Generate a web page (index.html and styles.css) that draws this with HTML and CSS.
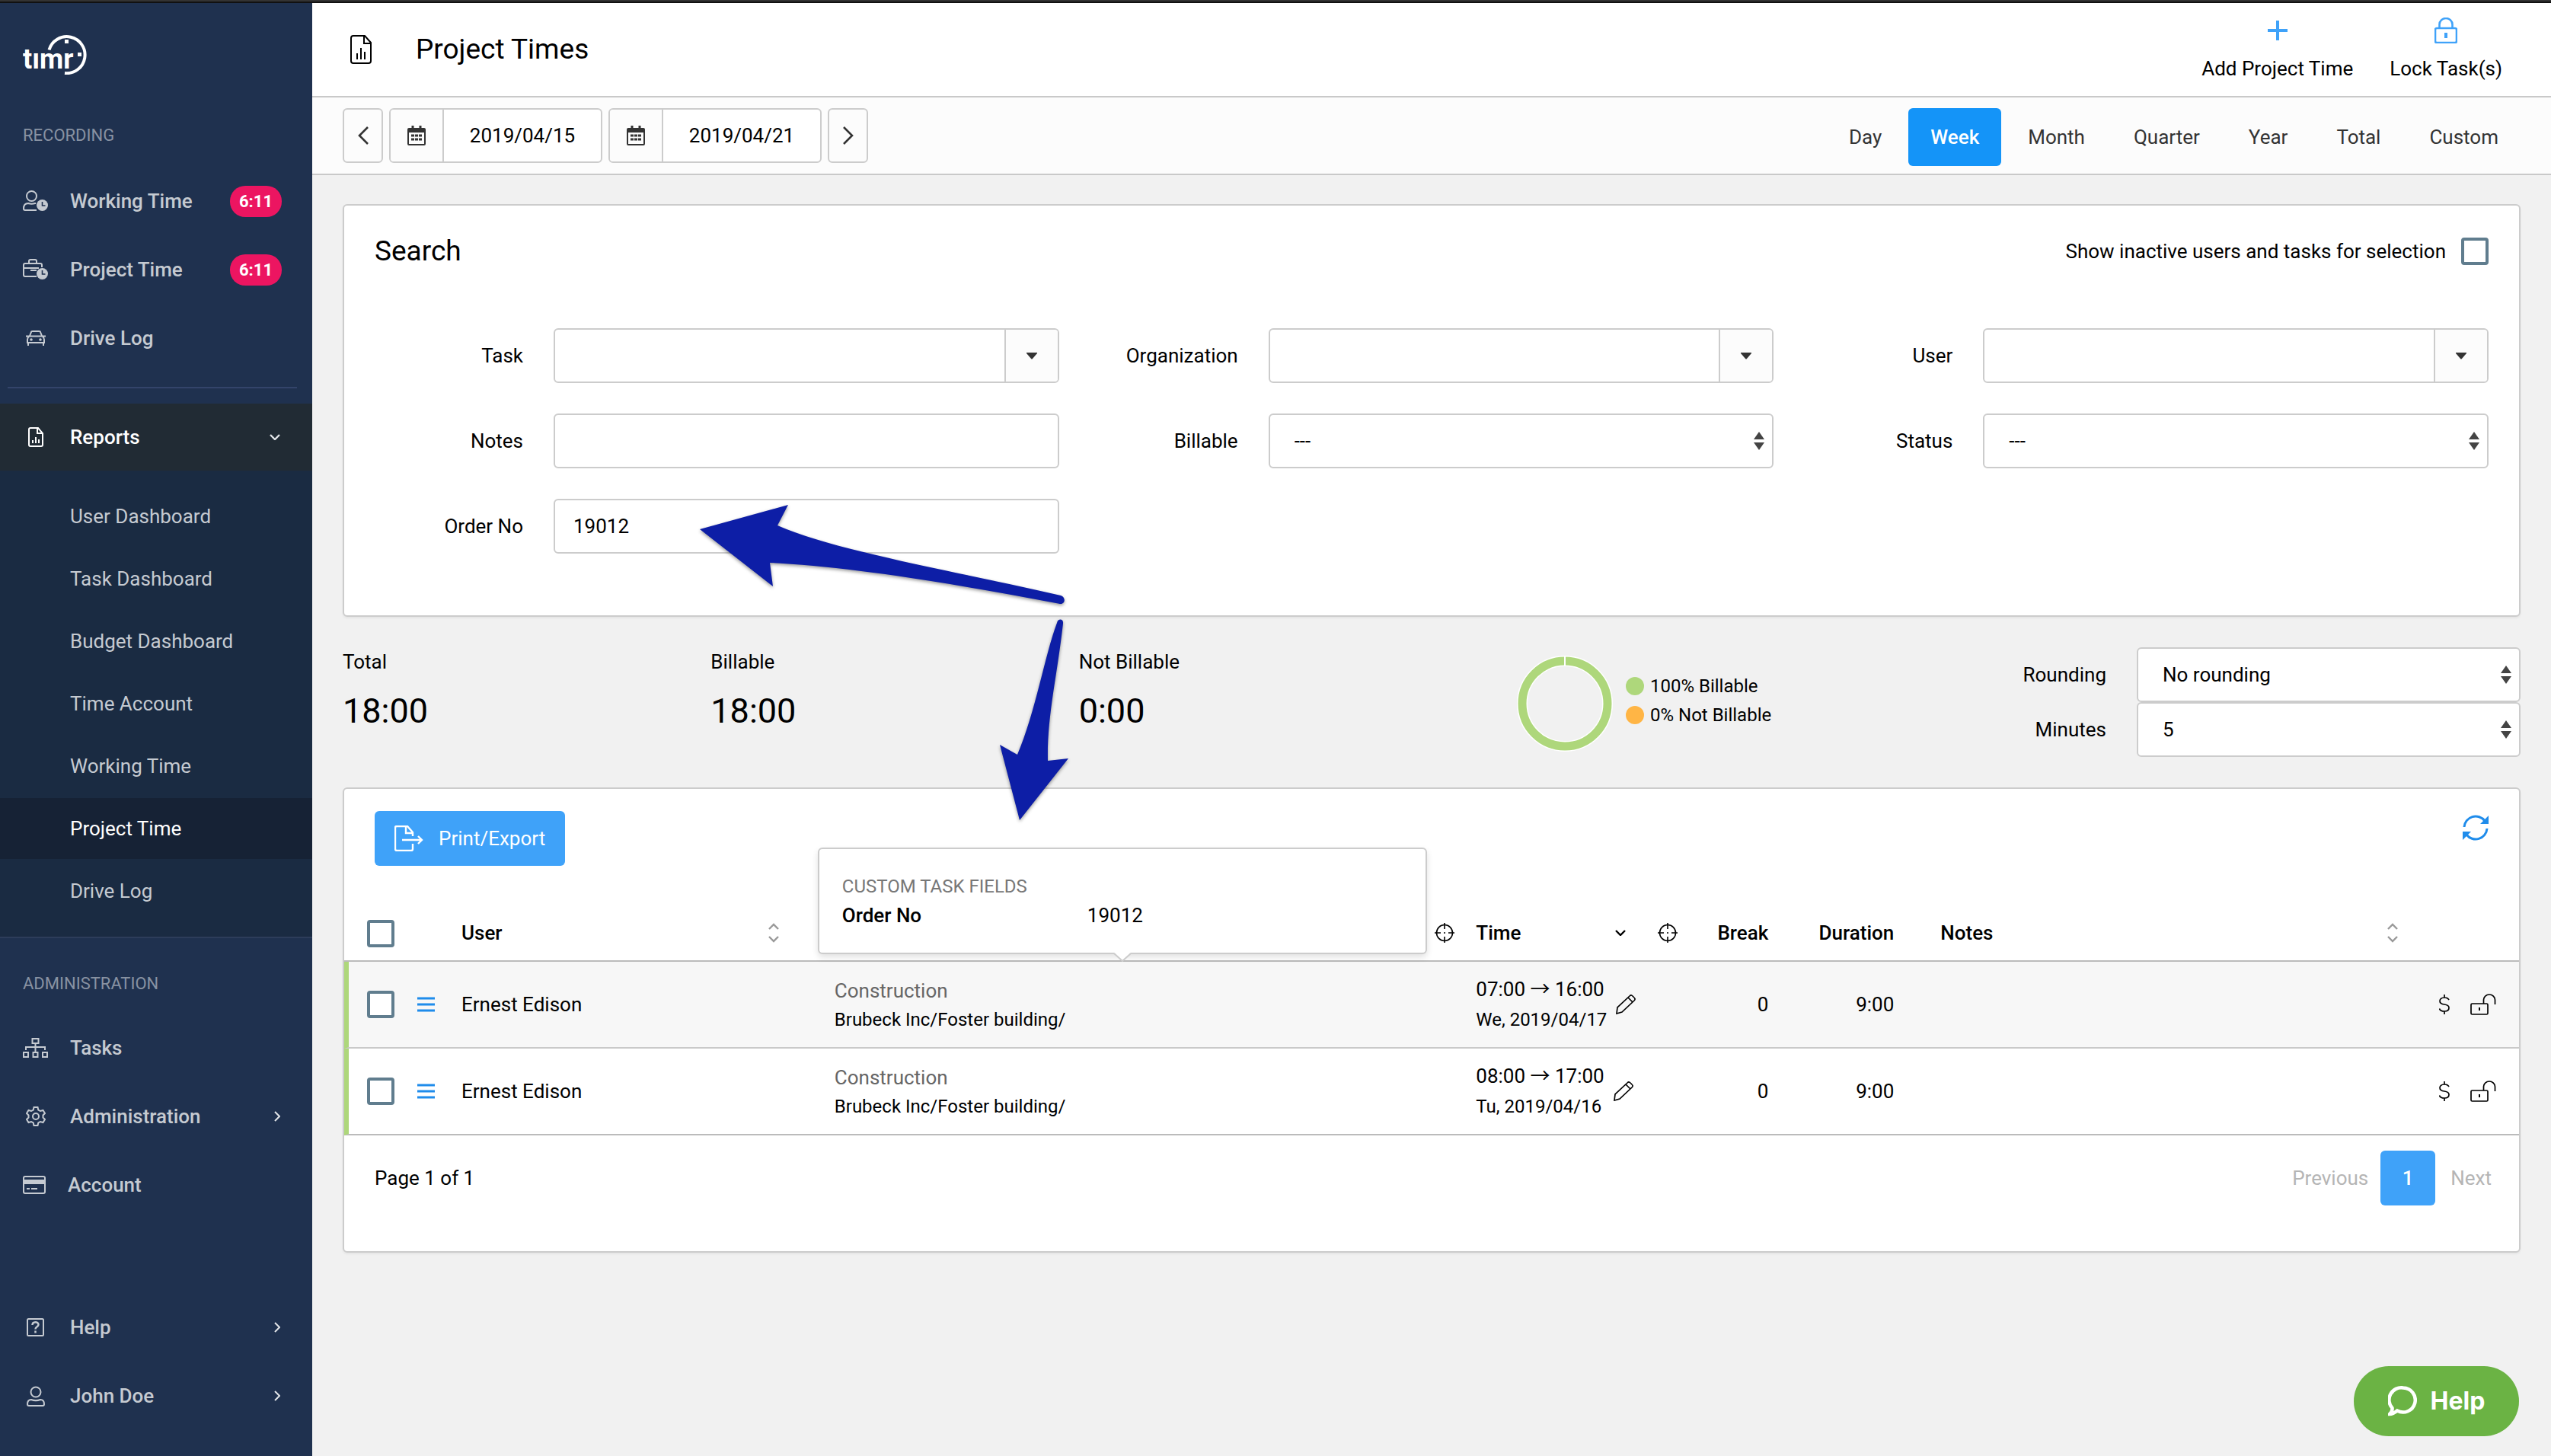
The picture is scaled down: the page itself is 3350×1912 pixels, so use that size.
FILE: index.html
```html
<!DOCTYPE html>
<html lang="en">
<head>
<meta charset="utf-8">
<title>Project Times</title>
<link rel="stylesheet" href="styles.css">
</head>
<body>
<svg class="defs" aria-hidden="true">
  <symbol id="chev-right" viewBox="0 0 8 16"><path d="M1 2l6 6-6 6" fill="none" stroke="currentColor" stroke-width="2"/></symbol>
  <symbol id="chev-down" viewBox="0 0 14 8"><path d="M1 1l6 6 6-6" fill="none" stroke="currentColor" stroke-width="2.4"/></symbol>
  <symbol id="report" viewBox="0 0 28 38"><path d="M4 1h15l8 9v24a3 3 0 0 1-3 3H4a3 3 0 0 1-3-3V4a3 3 0 0 1 3-3zM18 1v10h9M9 32v-8M14 32V17M19 32V22" fill="none" stroke="currentColor" stroke-width="2"/></symbol>
  <symbol id="report-bold" viewBox="0 0 20 26"><path d="M3 1h10l6 7v15a2 2 0 0 1-2 2H3a2 2 0 0 1-2-2V3a2 2 0 0 1 2-2zM12 1v7h7M6 21v-4M10 21v-8M14 21v-5" fill="none" stroke="currentColor" stroke-width="2"/></symbol>
  <symbol id="calendar" viewBox="0 0 24 26"><path d="M2 3h20a2 2 0 0 1 2 2v19a2 2 0 0 1-2 2H2a2 2 0 0 1-2-2V5a2 2 0 0 1 2-2zM2 9v15h20V9z" fill="currentColor" fill-rule="evenodd"/><path d="M7 0v5M17 0v5" stroke="currentColor" stroke-width="3"/><path d="M5 13h14M5 18h14" stroke="currentColor" stroke-width="3" stroke-dasharray="4 1"/></symbol>
  <symbol id="caret" viewBox="0 0 14 9"><path d="M0 0h14v1L7.500 8.500h-1L0 1z" fill="currentColor"/></symbol>
  <symbol id="updown" viewBox="0 0 14 24"><path d="M0 10L7 0l7 10zM0 14h14L7 24z" fill="currentColor"/></symbol>
  <symbol id="sort" viewBox="0 0 16 26"><path d="M2 8l6-6 6 6M2 18l6 6 6-6" fill="none" stroke="currentColor" stroke-width="2.4"/></symbol>
  <symbol id="crosshair" viewBox="0 0 26 26"><circle cx="13" cy="13" r="10.500" fill="none" stroke="currentColor" stroke-width="1.600"/><path d="M13 0v8M13 18v8M0 13h8M18 13h8M12 13h2" stroke="currentColor" stroke-width="1.600"/></symbol>
  <symbol id="pencil" viewBox="0 0 26 26"><path d="M1 25l1-8L18 2c2-2 3-1 5 1s3 3 1 5L8 23zM16 4l6 6" fill="none" stroke="currentColor" stroke-width="1.700"/></symbol>
  <symbol id="unlock" viewBox="0 0 34 28"><rect x="1" y="13" width="22" height="14" rx="1.500" fill="none" stroke="currentColor" stroke-width="1.700"/><path d="M17.500 13V8a7.500 7 0 0 1 15 0v6" fill="none" stroke="currentColor" stroke-width="1.700"/><path d="M12 18v4" stroke="currentColor" stroke-width="2"/></symbol>
  <symbol id="dollar" viewBox="0 0 14 26"><path d="M13 7c-1-2-3-3-6-3-4 0-6 2-6 4.500S3 12.500 7 13s6 2 6 4.500S11 22 7 22s-6-1-6.500-3.500M7 0v4M7 22v4" fill="none" stroke="currentColor" stroke-width="1.700"/></symbol>
  <symbol id="menu" viewBox="0 0 23 20"><path d="M0 2h23M0 10h23M0 18h23" stroke="currentColor" stroke-width="2.800"/></symbol>
</svg>

<div class="app">
  <nav class="sidebar" aria-label="Main">
    <svg class="logo" viewBox="0 0 84 52" role="img" aria-label="timr"><text class="logo-text" x="0" y="44">tımr</text><path d="M34.500 19.500A24 24 0 1 1 55 50" fill="none" stroke="#fff" stroke-width="4"/><path d="M55 6h5v5h-5zM72 23h5v5h-5z" fill="#fff"/></svg>
    <h2 class="nav-head">RECORDING</h2>
    <a class="nav-item" href="#"><span class="nav-icon"><svg width="33" height="28" viewBox="0 0 33 28"><g fill="none" stroke="currentColor" stroke-width="2"><circle cx="11.500" cy="7.500" r="6.500"/><path d="M18 26H3a2 2 0 0 1-2-2c0-4 2-7 6-7 3 1 6 1 9 0h1"/></g><circle cx="25.500" cy="19.500" r="7.500" fill="currentColor"/><path d="M25.500 15v5h4" stroke="#1f314f" fill="none" stroke-width="1.600"/></svg></span><span class="nav-label">Working Time</span><span class="badge">6:11</span></a>
    <a class="nav-item" href="#"><span class="nav-icon"><svg width="33" height="28" viewBox="0 0 33 28"><g fill="none" stroke="currentColor" stroke-width="2"><path d="M18 23H3a2 2 0 0 1-2-2V8a2 2 0 0 1 2-2h20a2 2 0 0 1 2 2v3M1 12h20M8 6V3a2 2 0 0 1 2-2h6a2 2 0 0 1 2 2v3M10 15h8"/></g><circle cx="25.500" cy="19.500" r="7.500" fill="currentColor"/><path d="M25.500 15v5h4" stroke="#1f314f" fill="none" stroke-width="1.600"/></svg></span><span class="nav-label">Project Time</span><span class="badge">6:11</span></a>
    <a class="nav-item" href="#"><span class="nav-icon"><svg width="26" height="20" viewBox="0 0 26 20"><g fill="none" stroke="currentColor" stroke-width="2"><path d="M2 16v-4c0-3 2-4 3-5l2-5c0-1 1-1 2-1h8c1 0 2 0 2 1l2 5c1 1 3 2 3 5v4zM0 7.500h26M3 16v4M23 16v4"/></g><circle cx="7" cy="12" r="1.800" fill="currentColor"/><circle cx="19" cy="12" r="1.800" fill="currentColor"/></svg></span><span class="nav-label">Drive Log</span></a>
    <hr class="nav-rule">
    <a class="nav-item nav-open" href="#"><span class="nav-icon"><svg width="20" height="26"><use href="#report-bold"/></svg></span><span class="nav-label">Reports</span><svg width="14" height="8"><use href="#chev-down"/></svg></a>
    <div class="submenu">
      <a class="sub-item" href="#">User Dashboard</a>
      <a class="sub-item" href="#">Task Dashboard</a>
      <a class="sub-item" href="#">Budget Dashboard</a>
      <a class="sub-item" href="#">Time Account</a>
      <a class="sub-item" href="#">Working Time</a>
      <a class="sub-item sub-active" href="#" aria-current="page">Project Time</a>
      <a class="sub-item" href="#">Drive Log</a>
    </div>
    <h2 class="nav-head nav-head-admin">ADMINISTRATION</h2>
    <a class="nav-item" href="#"><span class="nav-icon"><svg width="33" height="26" viewBox="0 0 33 26"><g fill="none" stroke="currentColor" stroke-width="2"><rect x="12.500" y="1" width="8" height="6"/><rect x="1" y="19" width="6" height="6"/><rect x="13.500" y="19" width="6" height="6"/><rect x="26" y="19" width="6" height="6"/><path d="M16.500 7v12M4 16v-4h25v4"/></g></svg></span><span class="nav-label">Tasks</span></a>
    <a class="nav-item" href="#"><span class="nav-icon"><svg width="26" height="26" viewBox="0 0 26 26"><g fill="none" stroke="currentColor" stroke-width="2"><circle cx="13" cy="13" r="4"/><path d="M10.500 1h5l.8 3.500 2.700 1.500 3.500-1 2.500 4-2.500 2.500v3l2.500 2.500-2.500 4-3.500-1-2.700 1.500-.8 3.500h-5l-.8-3.500-2.700-1.500-3.500 1-2.500-4 2.500-2.500v-3L1 9l2.500-4 3.500 1 2.700-1.500z"/></g></svg></span><span class="nav-label">Administration</span><svg width="8" height="16"><use href="#chev-right"/></svg></a>
    <a class="nav-item" href="#"><span class="nav-icon nav-icon-card"><svg width="30" height="24" viewBox="0 0 30 24"><g fill="none" stroke="currentColor" stroke-width="2"><rect x="1" y="1" width="28" height="22" rx="2"/><path d="M5 17h4M11 17h8"/></g><path d="M0 5h30v6H0z" fill="currentColor"/></svg></span><span class="nav-label">Account</span></a>
    <div class="nav-bottom">
      <a class="nav-item" href="#"><span class="nav-icon"><svg width="23" height="24" viewBox="0 0 23 24"><rect x="1" y="1" width="21" height="22" rx="1.500" fill="none" stroke="currentColor" stroke-width="2"/><path d="M7.500 9c0-5 8-5 8-.500 0 3-4 2.500-4 6M11.500 16.500v3" fill="none" stroke="currentColor" stroke-width="2.500"/></svg></span><span class="nav-label">Help</span><svg width="8" height="16"><use href="#chev-right"/></svg></a>
      <a class="nav-item" href="#"><span class="nav-icon"><svg width="24" height="27" viewBox="0 0 24 27"><g fill="none" stroke="currentColor" stroke-width="2"><circle cx="12" cy="8" r="6.500"/><path d="M3 26a2 2 0 0 1-2-2c0-4 2-6 5-6 4 1.500 8 1.500 12 0 3 0 5 2 5 6a2 2 0 0 1-2 2z"/></g></svg></span><span class="nav-label">John Doe</span><svg width="8" height="16"><use href="#chev-right"/></svg></a>
    </div>
  </nav>

  <main class="main">
    <header class="page-head">
      <svg width="28" height="38"><use href="#report"/></svg>
      <h1 class="page-title">Project Times</h1>
      <div class="head-actions">
        <button class="head-action" type="button"><span class="head-icon"><svg width="26" height="26" viewBox="0 0 26 26"><path d="M13 0v26M0 13h26" stroke="currentColor" stroke-width="4"/></svg></span>Add Project Time</button>
        <button class="head-action" type="button"><span class="head-icon"><svg width="30" height="34" viewBox="0 0 30 34"><rect x="1" y="14" width="28" height="19" rx="2" fill="none" stroke="currentColor" stroke-width="2.600"/><path d="M6.500 14V9a8.500 8 0 0 1 17 0v5" fill="none" stroke="currentColor" stroke-width="2.600"/><path d="M15 20v7" stroke="currentColor" stroke-width="4"/></svg></span>Lock Task(s)</button>
      </div>
    </header>

    <div class="toolbar">
      <button class="step" type="button" aria-label="Previous week"><svg width="16" height="24" viewBox="0 0 16 24"><path d="M14 1L3 12l11 11" fill="none" stroke="currentColor" stroke-width="2.600"/></svg></button>
      <div class="group date"><button class="addon" type="button" aria-label="Pick start date"><svg width="24" height="26"><use href="#calendar"/></svg></button><input class="group-input" type="text" aria-label="Start date" value="2019/04/15"></div>
      <div class="group date"><button class="addon" type="button" aria-label="Pick end date"><svg width="24" height="26"><use href="#calendar"/></svg></button><input class="group-input" type="text" aria-label="End date" value="2019/04/21"></div>
      <button class="step" type="button" aria-label="Next week"><svg width="16" height="24" viewBox="0 0 16 24"><path d="M2 1l11 11L2 23" fill="none" stroke="currentColor" stroke-width="2.600"/></svg></button>
      <div class="ranges">
        <button class="range" type="button">Day</button>
        <button class="range range-on" type="button">Week</button>
        <button class="range" type="button">Month</button>
        <button class="range" type="button">Quarter</button>
        <button class="range" type="button">Year</button>
        <button class="range" type="button">Total</button>
        <button class="range" type="button">Custom</button>
      </div>
    </div>

    <div class="content">
      <section class="card search">
        <div class="search-head">
          <h2 class="card-title">Search</h2>
          <label class="inactive">Show inactive users and tasks for selection<input class="check" type="checkbox"></label>
        </div>
        <div class="fields">
          <div class="field"><label for="task">Task</label><div class="group"><input class="group-input" id="task" type="text"><button class="addon addon-end" type="button" aria-label="Choose task"><svg width="14" height="9"><use href="#caret"/></svg></button></div></div>
          <div class="field"><label for="org">Organization</label><div class="group"><input class="group-input" id="org" type="text"><button class="addon addon-end" type="button" aria-label="Choose organization"><svg width="14" height="9"><use href="#caret"/></svg></button></div></div>
          <div class="field"><label for="user">User</label><div class="group"><input class="group-input" id="user" type="text"><button class="addon addon-end" type="button" aria-label="Choose user"><svg width="14" height="9"><use href="#caret"/></svg></button></div></div>
          <div class="field"><label for="notes">Notes</label><input class="control" id="notes" type="text"></div>
          <div class="field"><label for="billable">Billable</label><div class="select"><select class="control" id="billable"><option>---</option></select><svg class="select-mark" width="14" height="24"><use href="#updown"/></svg></div></div>
          <div class="field"><label for="status">Status</label><div class="select"><select class="control" id="status"><option>---</option></select><svg class="select-mark" width="14" height="24"><use href="#updown"/></svg></div></div>
          <div class="field"><label for="order">Order No</label><input class="control" id="order" type="text" value="19012"></div>
        </div>
      </section>

      <section class="summary">
        <div class="stat"><div class="stat-label">Total</div><div class="stat-value">18:00</div></div>
        <div class="stat"><div class="stat-label">Billable</div><div class="stat-value">18:00</div></div>
        <div class="stat"><div class="stat-label">Not Billable</div><div class="stat-value">0:00</div></div>
        <div class="chart">
          <svg width="126" height="126" viewBox="0 0 126 126" aria-hidden="true"><circle cx="63" cy="63" r="56" fill="none" stroke="#fff" stroke-width="14"/><circle cx="63" cy="63" r="56" fill="none" stroke="#aed77b" stroke-width="11"/><path d="M63 0v14" stroke="#fff" stroke-width="2"/></svg>
          <ul class="legend"><li><span class="dot dot-green"></span>100% Billable</li><li><span class="dot dot-orange"></span>0% Not Billable</li></ul>
        </div>
        <div class="rounding">
          <label for="rounding">Rounding</label><div class="select"><select class="control" id="rounding"><option>No rounding</option></select><svg class="select-mark" width="14" height="24"><use href="#updown"/></svg></div>
          <label for="minutes">Minutes</label><div class="select"><select class="control" id="minutes"><option>5</option></select><svg class="select-mark" width="14" height="24"><use href="#updown"/></svg></div>
        </div>
      </section>

      <section class="card results">
        <div class="results-head">
          <button class="export" type="button"><svg width="38" height="34" viewBox="0 0 38 34"><path d="M24 24v7a2 2 0 0 1-2 2H3a2 2 0 0 1-2-2V3a2 2 0 0 1 2-2h14l7 8v5M15 1v9h9M10 19h25M31 14l5 5-5 5" fill="none" stroke="currentColor" stroke-width="2.400"/></svg>Print/Export</button>
          <button class="refresh" type="button" aria-label="Refresh"><svg width="34" height="34" viewBox="0 0 34 34"><path d="M2 16A15 15 0 0 1 29 8M32 18A15 15 0 0 1 5 26" fill="none" stroke="currentColor" stroke-width="3"/><path d="M34 1v11H23zM0 33V22h11z" fill="currentColor"/></svg></button>
        </div>
        <table class="times">
          <colgroup><col class="c-check"><col class="c-menu"><col class="c-user"><col class="c-task"><col class="c-time"><col class="c-break"><col class="c-duration"><col><col class="c-actions"></colgroup>
          <thead>
            <tr>
              <th class="cell-check"><input class="check" type="checkbox" aria-label="Select all"></th>
              <th></th>
              <th class="cell-user"><div class="th-row">User<svg class="muted" width="16" height="26"><use href="#sort"/></svg></div></th>
              <th><div class="th-row th-end"><svg width="26" height="26"><use href="#crosshair"/></svg></div></th>
              <th><div class="th-row">Time<span class="th-icons"><svg width="14" height="8"><use href="#chev-down"/></svg><svg width="26" height="26"><use href="#crosshair"/></svg></span></div></th>
              <th class="num">Break</th>
              <th class="num">Duration</th>
              <th class="cell-notes"><div class="th-row">Notes<svg class="muted" width="16" height="26"><use href="#sort"/></svg></div></th>
              <th></th>
            </tr>
          </thead>
          <tbody>
            <tr class="hover">
              <td class="cell-check"><input class="check" type="checkbox" aria-label="Select entry"></td>
              <td><button class="row-menu" type="button" aria-label="Entry menu"><svg width="23" height="20"><use href="#menu"/></svg></button></td>
              <td>Ernest Edison</td>
              <td class="cell-task"><div class="task-name">Construction</div><div class="small">Brubeck Inc/Foster building/</div>
                <div class="popover" role="tooltip">
                  <div class="popover-title">CUSTOM TASK FIELDS</div>
                  <dl class="popover-row"><dt>Order No</dt><dd>19012</dd></dl>
                  <svg class="popover-tip" width="24" height="12" viewBox="0 0 24 12"><path d="M1 0h22L12 11z" fill="#fff"/><path d="M1 1l11 10L23 1" fill="none" stroke="#ccc" stroke-width="2"/></svg>
                </div>
              </td>
              <td><div class="when"><div><div class="clock">07:00 → 16:00</div><div class="clock small">We, 2019/04/17</div></div><svg width="26" height="26"><use href="#pencil"/></svg></div></td>
              <td class="num">0</td>
              <td class="num">9:00</td>
              <td></td>
              <td class="cell-actions"><div class="marks"><svg width="14" height="26"><use href="#dollar"/></svg><svg width="34" height="28"><use href="#unlock"/></svg></div></td>
            </tr>
            <tr>
              <td class="cell-check"><input class="check" type="checkbox" aria-label="Select entry"></td>
              <td><button class="row-menu" type="button" aria-label="Entry menu"><svg width="23" height="20"><use href="#menu"/></svg></button></td>
              <td>Ernest Edison</td>
              <td class="cell-task"><div class="task-name">Construction</div><div class="small">Brubeck Inc/Foster building/</div></td>
              <td><div class="when"><div><div class="clock">08:00 → 17:00</div><div class="clock small">Tu, 2019/04/16</div></div><svg width="26" height="26"><use href="#pencil"/></svg></div></td>
              <td class="num">0</td>
              <td class="num">9:00</td>
              <td></td>
              <td class="cell-actions"><div class="marks"><svg width="14" height="26"><use href="#dollar"/></svg><svg width="34" height="28"><use href="#unlock"/></svg></div></td>
            </tr>
          </tbody>
        </table>
        <div class="pager">
          <span>Page 1 of 1</span>
          <div class="pages"><button class="page" type="button" disabled>Previous</button><button class="page page-on" type="button">1</button><button class="page" type="button" disabled>Next</button></div>
        </div>
      </section>
    </div>

    <svg class="arrows" width="520" height="440" viewBox="900 655 520 440" aria-hidden="true">
      <path d="M919 695L1035 663L1021 690C1100 724 1240 747 1393 782C1400 784 1399 794 1392 793C1260 768 1120 744 1011 739L1015 770Z"/>
      <path d="M1388 818C1389 812 1397 812 1396 819C1388 890 1375 940 1376 999L1403 996L1339 1077L1313 978L1336 991C1360 935 1372 860 1388 818Z"/>
    </svg>
    <button class="help" type="button"><svg width="38" height="40" viewBox="0 0 38 40"><path d="M20 2.500a16 16 0 1 1-8 30C9 35 6 37 2 37c3-3 4-5 3.500-8A16 16 0 0 1 20 2.500z" fill="none" stroke="currentColor" stroke-width="4.500"/></svg>Help</button>
  </main>
</div>
</body>
</html>
```
FILE: styles.css
```css
* { box-sizing: border-box; }

body {
  margin: 0;
  border-top: 2px solid #333;
  background: #f1f1f1;
  color: #000;
  font: 26px/38px Roboto, "Liberation Sans", sans-serif;
}

button, input, select { margin: 0; font: inherit; color: inherit; }
button { padding: 0; border: 0; background: none; cursor: pointer; }
h1, h2, ul, dl, dd { margin: 0; padding: 0; font-weight: 400; }
a { color: inherit; text-decoration: none; }
svg { display: block; flex: none; }
.defs { position: absolute; width: 0; height: 0; }

.app { display: flex; min-height: calc(100vh - 2px); border-top: 2px solid #111; }

/* Sidebar */
.sidebar {
  display: flex;
  flex: none;
  flex-direction: column;
  width: 410px;
  padding-bottom: 34px;
  background: #1f314f;
  color: #c5cad1;
}
.logo { width: 84px; height: 52px; margin: 42px 0 0 30px; }
.logo-text { fill: #fff; font: 700 36px Roboto, sans-serif; }
.nav-head { margin: 61px 0 22px 30px; color: #8892a2; font-size: 22px; line-height: 38px; }
.nav-item { display: flex; align-items: center; height: 90px; padding: 0 42px 0 30px; font-weight: 500; }
.nav-item > svg { color: #e1e4e8; }
.nav-icon { display: flex; justify-content: center; width: 33px; margin-right: 29px; }
.nav-icon-card { width: 30px; }
.nav-label { flex: 1; }
.badge {
  width: 68px;
  height: 41px;
  margin-right: -2px;
  border-radius: 20px;
  background: #ec1561;
  color: #fff;
  font-size: 22px;
  font-weight: 700;
  line-height: 41px;
  text-align: center;
}
.nav-rule { width: 380px; margin: 19px 0 20px 10px; border: 0; border-top: 2px solid #33446a; }
.nav-open { height: 88px; background: #212b34; color: #fff; }
.submenu { display: flex; flex-direction: column; gap: 2px; padding: 20px 0; border-bottom: 2px solid #2d3d5a; background: #1a2b42; }
.sub-item { height: 80px; padding-left: 92px; line-height: 80px; }
.sub-active { background: #162235; color: #fff; }
.nav-head-admin { margin: 41px 0 20px 30px; }
.nav-bottom { margin-top: auto; }

/* Header and toolbar */
.main { position: relative; flex: 1; min-width: 0; }
.page-head {
  display: flex;
  align-items: center;
  height: 124px;
  padding: 0 64px 0 50px;
  border-bottom: 2px solid #c9c9c9;
  background: #fff;
}
.page-title { margin-left: 58px; font-size: 37px; line-height: 44px; }
.head-actions { display: flex; gap: 48px; margin-left: auto; }
.head-action { display: flex; flex-direction: column; align-items: center; gap: 13px; }
.head-icon { display: flex; align-items: center; height: 36px; color: #3fa2f9; }

.toolbar {
  display: flex;
  gap: 8px;
  align-items: flex-start;
  height: 102px;
  padding: 14px 40px 0;
  border-bottom: 2px solid #c9c9c9;
  background: #fcfcfc;
}
.step {
  display: flex;
  align-items: center;
  justify-content: center;
  width: 53px;
  height: 72px;
  border: 2px solid #ccc;
  border-radius: 6px;
  color: #333;
}
.group { display: flex; height: 72px; border: 2px solid #ccc; border-radius: 6px; background: #fff; overflow: hidden; }
.date { width: 280px; }
.date .group-input { text-align: center; }
.group-input { flex: 1; min-width: 0; padding: 0 24px; border: 0; background: none; outline: 0; }
.addon {
  display: flex;
  flex: none;
  align-items: center;
  justify-content: center;
  width: 70px;
  border-right: 2px solid #ccc;
  background: #fcfcfc;
  color: #333;
}
.addon-end { border-right: 0; border-left: 2px solid #ccc; }
.ranges { display: flex; gap: 6px; margin-left: auto; }
.range { height: 76px; padding: 0 29px; border-radius: 6px; color: #333; }
.range-on { background: #1494f8; color: #fff; font-weight: 500; }

/* Search */
.content { padding: 38px 40px 0; }
.card { border: 2px solid #ccc; border-radius: 6px; background: #fff; box-shadow: 0 2px 3px rgba(0, 0, 0, 0.05); }
.search { padding: 40px 40px 81px; }
.search-head { display: flex; align-items: center; justify-content: space-between; height: 40px; margin-bottom: 81px; }
.card-title { font-size: 37px; line-height: 40px; }
.inactive { display: flex; gap: 20px; align-items: center; }
.check {
  display: block;
  width: 36px;
  height: 36px;
  border: 4px solid #607d8e;
  border-radius: 4px;
  background: #fff;
  appearance: none;
}
.fields { display: grid; grid-template-columns: repeat(3, 1fr); gap: 40px; }
.field { display: grid; grid-template-columns: 195px minmax(0, 1fr); gap: 40px; align-items: center; }
.field > label, .rounding > label { text-align: right; }
.control {
  display: block;
  width: 100%;
  height: 72px;
  padding: 0 24px;
  border: 2px solid #ccc;
  border-radius: 6px;
  background: #fff;
  outline: 0;
  appearance: none;
}
.select { position: relative; }
.select .control { padding: 0 32px; }
.select-mark { position: absolute; top: 24px; right: 12px; color: #444; pointer-events: none; }

/* Summary */
.summary { display: grid; grid-template-columns: repeat(12, minmax(0, 1fr)); margin: 40px -20px; }
.stat { grid-column: span 2; padding-left: 20px; }
.stat-value { margin-top: 18px; font-size: 45px; line-height: 56px; }
.chart { display: flex; grid-column: span 2; gap: 17px; align-items: center; padding: 4px 0 0 112px; }
.legend { margin-bottom: 8px; list-style: none; font-size: 24px; white-space: nowrap; }
.legend li { display: flex; gap: 8px; align-items: center; }
.dot { width: 24px; height: 24px; border-radius: 50%; }
.dot-green { background: #aed77b; }
.dot-orange { background: #ffb545; }
.rounding { display: grid; grid-column: span 4; grid-template-columns: 1fr 504px; column-gap: 40px; align-items: center; padding-right: 20px; }

/* Results */
.results-head { display: flex; justify-content: space-between; padding: 29px 40px 50px; }
.export {
  display: flex;
  gap: 20px;
  align-items: center;
  height: 72px;
  padding: 0 26px;
  border-radius: 6px;
  background: #3fa2f9;
  color: #fff;
}
.refresh { align-self: flex-start; padding-top: 5px; color: #1f8ceb; }
.times { width: 100%; border-spacing: 0; table-layout: fixed; }
.c-check { width: 82px; }
.c-menu { width: 58px; }
.c-user { width: 17.15%; }
.c-task { width: 29.5%; }
.c-time { width: 293px; }
.c-break { width: 119px; }
.c-duration { width: 165px; }
.c-actions { width: 124px; }
.times th, .times td { padding: 0 14px; text-align: left; border-bottom: 2px solid #bbb; }
.times th { height: 76px; padding-top: 2px; font-weight: 500; }
.times td { height: 114px; }
.times .hover td { border-bottom-color: #c9c9c9; background: #f7f7f7; }
.times .cell-check { padding-left: 30px; }
.times th.cell-check { padding-top: 4px; }
.times td.cell-check { padding-left: 24px; border-left: 6px solid #aed77b; }
.times .cell-user { padding-right: 58px; }
.times .cell-notes { padding-right: 34px; padding-left: 47px; }
.times .cell-actions { padding: 0 30px 0 0; }
.times .num { text-align: right; }
.th-row { display: flex; align-items: center; justify-content: space-between; }
.th-end { justify-content: flex-end; }
.th-icons { display: flex; gap: 42px; align-items: center; }
.muted { color: #999; }
.row-menu { display: block; color: #1f8ceb; }
.times .cell-task { position: relative; padding-top: 2px; }
.task-name { color: #666; }
.small { font-size: 24px; }
.clock { font-family: Roboto, "Noto Sans CJK JP", sans-serif; line-height: 40px; }
.when { display: flex; gap: 12px; align-items: center; white-space: nowrap; }
.marks { display: flex; gap: 27px; align-items: center; justify-content: flex-end; }

.popover {
  position: absolute;
  bottom: calc(100% + 10px);
  left: -8px;
  width: 800px;
  height: 140px;
  padding: 30px;
  border: 2px solid #ccc;
  border-radius: 6px;
  background: #fff;
  box-shadow: 0 4px 8px rgba(0, 0, 0, 0.12);
}
.popover-title { color: #777; font-size: 24px; }
.popover-row { display: grid; grid-template-columns: 322px 1fr; }
.popover-row dt { font-weight: 500; }
.popover-tip { position: absolute; top: 100%; left: 50%; margin-left: -12px; }

.pager { display: flex; align-items: center; justify-content: space-between; padding: 20px 20px 60px 40px; }
.pages { display: flex; }
.page { height: 72px; padding: 0 16px 0 20px; border-radius: 6px; color: #b5b5b5; }
.page-on { width: 72px; padding: 0; background: #3fa2f9; color: #fff; font-weight: 500; }

/* Floating items */
.arrows { position: absolute; top: 651px; left: 490px; fill: #0d1ea6; pointer-events: none; filter: drop-shadow(0 2px 2px rgba(0, 0, 0, 0.4)); }
.help {
  position: fixed;
  right: 42px;
  bottom: 26px;
  display: flex;
  gap: 18px;
  align-items: center;
  justify-content: center;
  width: 217px;
  height: 92px;
  border-radius: 46px;
  background: #6bb344;
  color: #fff;
  font: 700 32px/40px Inter, sans-serif;
}
```
